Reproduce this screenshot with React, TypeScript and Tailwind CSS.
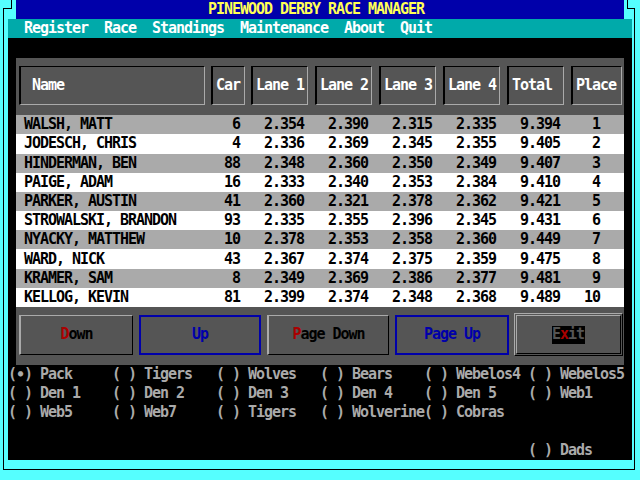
const rows = [
  ["WALSH, MATT", "6", "2.354", "2.390", "2.315", "2.335", "9.394", "1"],
  ["JODESCH, CHRIS", "4", "2.336", "2.369", "2.345", "2.355", "9.405", "2"],
  ["HINDERMAN, BEN", "88", "2.348", "2.360", "2.350", "2.349", "9.407", "3"],
  ["PAIGE, ADAM", "16", "2.333", "2.340", "2.353", "2.384", "9.410", "4"],
  ["PARKER, AUSTIN", "41", "2.360", "2.321", "2.378", "2.362", "9.421", "5"],
  ["STROWALSKI, BRANDON", "93", "2.335", "2.355", "2.396", "2.345", "9.431", "6"],
  ["NYACKY, MATTHEW", "10", "2.378", "2.353", "2.358", "2.360", "9.449", "7"],
  ["WARD, NICK", "43", "2.367", "2.374", "2.375", "2.359", "9.475", "8"],
  ["KRAMER, SAM", "8", "2.349", "2.369", "2.386", "2.377", "9.481", "9"],
  ["KELLOG, KEVIN", "81", "2.399", "2.374", "2.348", "2.368", "9.489", "10"],
];

const dens = [
  "(∙) Pack", "( ) Tigers", "( ) Wolves", "( ) Bears", "( ) Webelos4", "( ) Webelos5",
  "( ) Den 1", "( ) Den 2", "( ) Den 3", "( ) Den 4", "( ) Den 5", "( ) Web1",
  "( ) Web5", "( ) Web7", "( ) Tigers", "( ) Wolverine", "( ) Cobras", "",
  "", "", "", "", "", "",
  "", "", "", "", "", "( ) Dads",
];

function HeadBox({ label, className }: { label: string; className: string }) {
  return (
    <div
      className={`flex h-[39px] items-center border-b border-l-2 border-r border-t border-b-[#aaaaaa] border-l-black border-r-[#aaaaaa] border-t-black text-white ${className}`}
    >
      {label}
    </div>
  );
}

export default function App() {
  return (
    <div className="flex h-[480px] w-[640px] flex-col overflow-hidden bg-[#55ffff] font-['DejaVu_Sans_Mono',monospace] text-[15px] font-bold leading-none tracking-[-1.03px]">
      {/* title row with the frame notch */}
      <div className="flex h-[19.2px] shrink-0">
        <div className="flex w-[16px] flex-col">
          <div className="h-[8px] w-[12px] border-r border-black" />
          <div className="ml-[3px] w-[9px] flex-1 border-l border-t border-black" />
        </div>
        <div className="flex flex-1 items-center bg-[#0000aa] pl-[192px] text-[#ffff55]">
          PINEWOOD DERBY RACE MANAGER
        </div>
        <div className="flex w-[16px] flex-col">
          <div className="h-[8px] w-[4px] border-r border-black" />
          <div className="ml-[3px] w-[8px] flex-1 border-r border-t border-black" />
        </div>
      </div>

      <div className="ml-[3px] flex w-[632px] flex-col border-x border-b border-black pb-[9px] pl-[4px] pr-[2px]">
        {/* menu */}
        <div className="flex h-[19.2px] items-center gap-[16px] bg-[#00aaaa] pl-[16px] text-white">
          <span>Register</span>
          <span>Race</span>
          <span>Standings</span>
          <span>Maintenance</span>
          <span>About</span>
          <span>Quit</span>
        </div>

        <div className="flex h-[421.6px] flex-col bg-black">
          <div className="mx-[8px] mt-[19.2px] flex h-[307.2px] flex-col bg-[#555555]">
            <div className="flex h-[57.6px] shrink-0 pl-[3px] pt-[8.4px]">
              <HeadBox label="Name" className="w-[186px] pl-[11px]" />
              <HeadBox label="Car" className="ml-[6px] w-[34px] pl-[3px]" />
              <HeadBox label="Lane 1" className="ml-[6px] w-[57px] pl-[3px]" />
              <HeadBox label="Lane 2" className="ml-[7px] w-[57px] pl-[3px]" />
              <HeadBox label="Lane 3" className="ml-[7px] w-[57px] pl-[3px]" />
              <HeadBox label="Lane 4" className="ml-[7px] w-[57px] pl-[3px]" />
              <HeadBox label="Total" className="ml-[7px] w-[57px] pl-[3px]" />
              <HeadBox label="Place" className="ml-[7px] w-[51px] pl-[3px]" />
            </div>

            {rows.map((r, i) => (
              <div
                key={r[0]}
                className={`flex h-[19.2px] shrink-0 items-center text-black ${i % 2 === 0 ? "bg-[#aaaaaa]" : "bg-white"}`}
              >
                <span className="w-[184px] pl-[8px]">{r[0]}</span>
                <span className="w-[40px] text-right">{r[1]}</span>
                <span className="w-[64px] text-right">{r[2]}</span>
                <span className="w-[64px] text-right">{r[3]}</span>
                <span className="w-[64px] text-right">{r[4]}</span>
                <span className="w-[64px] text-right">{r[5]}</span>
                <span className="w-[64px] text-right">{r[6]}</span>
                <span className="w-[40px] text-right">{r[7]}</span>
              </div>
            ))}

            <div className="flex h-[57.6px] shrink-0 items-center pb-[2px] pl-[3px]">
              <div className="flex h-[40px] w-[114px] items-center justify-center border-b border-l-2 border-r border-t border-b-black border-l-[#aaaaaa] border-r-black border-t-[#aaaaaa] text-black">
                <span className="text-[#aa0000]">D</span>own
              </div>
              <div className="ml-[6px] flex h-[40px] w-[122px] items-center justify-center border-2 border-[#0000aa] text-[#0000aa]">
                Up
              </div>
              <div className="ml-[6px] flex h-[40px] w-[122px] items-center justify-center border-b border-l-2 border-r border-t border-b-black border-l-[#aaaaaa] border-r-black border-t-[#aaaaaa] text-black">
                <span className="text-[#aa0000]">P</span>age Down
              </div>
              <div className="ml-[6px] flex h-[40px] w-[114px] items-center justify-center border-2 border-[#0000aa] text-[#0000aa]">
                Page Up
              </div>
              <div className="ml-[5px] h-[43px] w-[109px] border border-b-black border-l-[#aaaaaa] border-r-black border-t-[#aaaaaa] p-[1px]">
                <div className="flex h-full items-center justify-center border border-b-black border-l-[#aaaaaa] border-r-black border-t-[#aaaaaa]">
                  <span className="flex h-[18px] items-center bg-black pr-[1px] text-[#555555]">
                    E<span className="text-[#aa0000]">x</span>it
                  </span>
                </div>
              </div>
            </div>
          </div>

          <div className="grid grid-cols-[repeat(6,104px)] auto-rows-[19.2px] text-[#aaaaaa]">
            {dens.map((d, i) => (
              <div key={i} className="flex items-center whitespace-pre">
                {d}
              </div>
            ))}
          </div>
        </div>
      </div>
    </div>
  );
}
